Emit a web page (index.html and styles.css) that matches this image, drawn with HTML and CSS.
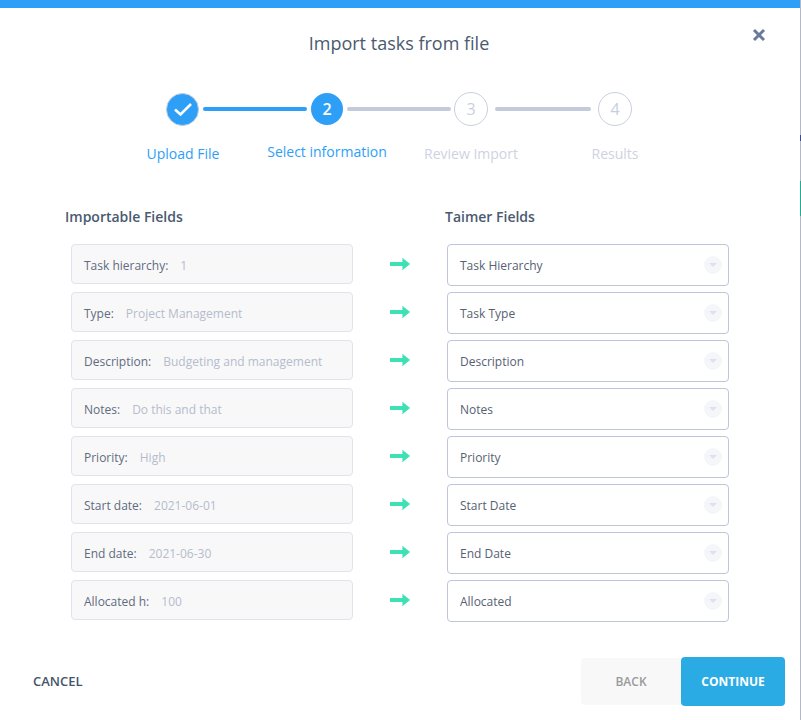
FILE: index.html
```html
<!DOCTYPE html>
<html lang="en">

<head>
    <meta charset="UTF-8">
    <meta name="viewport" content="width=device-width, initial-scale=1.0">
    <title>Import tasks from file</title>
    <link rel="stylesheet" href="styles.css">
</head>

<body>

    <div class="dialog">
        <button class="close" aria-label="Close">
            <svg width="14" height="14" viewBox="0 0 14 14"><path d="M2 2 L12 12 M12 2 L2 12" /></svg>
        </button>

        <h1>Import tasks from file</h1>

        <div class="stepper">
            <div class="circle done">
                <svg width="20" height="16" viewBox="0 0 20 16"><path d="M2 8.5 L7.5 13.5 L18 3" /></svg>
            </div>
            <div class="line line-a active"></div>
            <div class="circle current">2</div>
            <div class="line line-a"></div>
            <div class="circle todo">3</div>
            <div class="line line-b"></div>
            <div class="circle todo">4</div>
        </div>

        <div class="step-labels">
            <span class="label on">Upload File</span>
            <span class="label on raised">Select information</span>
            <span class="label">Review Import</span>
            <span class="label">Results</span>
        </div>

        <div class="headings">
            <h2>Importable Fields</h2>
            <h2>Taimer Fields</h2>
        </div>

        <div class="rows">
            <div class="row">
                <div class="source"><span class="name">Task hierarchy:</span><span class="value">1</span></div>
                <svg class="arrow" width="22" height="14" viewBox="0 0 22 14"><path d="M0 5 H13 V0.5 L21 7 L13 13.5 V9 H0 Z" /></svg>
                <div class="select">Task Hierarchy<span class="caret"></span></div>
            </div>
            <div class="row">
                <div class="source"><span class="name">Type:</span><span class="value">Project Management</span></div>
                <svg class="arrow" width="22" height="14" viewBox="0 0 22 14"><path d="M0 5 H13 V0.5 L21 7 L13 13.5 V9 H0 Z" /></svg>
                <div class="select">Task Type<span class="caret"></span></div>
            </div>
            <div class="row">
                <div class="source"><span class="name">Description:</span><span class="value">Budgeting and management</span></div>
                <svg class="arrow" width="22" height="14" viewBox="0 0 22 14"><path d="M0 5 H13 V0.5 L21 7 L13 13.5 V9 H0 Z" /></svg>
                <div class="select">Description<span class="caret"></span></div>
            </div>
            <div class="row">
                <div class="source"><span class="name">Notes:</span><span class="value">Do this and that</span></div>
                <svg class="arrow" width="22" height="14" viewBox="0 0 22 14"><path d="M0 5 H13 V0.5 L21 7 L13 13.5 V9 H0 Z" /></svg>
                <div class="select">Notes<span class="caret"></span></div>
            </div>
            <div class="row">
                <div class="source"><span class="name">Priority:</span><span class="value">High</span></div>
                <svg class="arrow" width="22" height="14" viewBox="0 0 22 14"><path d="M0 5 H13 V0.5 L21 7 L13 13.5 V9 H0 Z" /></svg>
                <div class="select">Priority<span class="caret"></span></div>
            </div>
            <div class="row">
                <div class="source"><span class="name">Start date:</span><span class="value">2021-06-01</span></div>
                <svg class="arrow" width="22" height="14" viewBox="0 0 22 14"><path d="M0 5 H13 V0.5 L21 7 L13 13.5 V9 H0 Z" /></svg>
                <div class="select">Start Date<span class="caret"></span></div>
            </div>
            <div class="row">
                <div class="source"><span class="name">End date:</span><span class="value">2021-06-30</span></div>
                <svg class="arrow" width="22" height="14" viewBox="0 0 22 14"><path d="M0 5 H13 V0.5 L21 7 L13 13.5 V9 H0 Z" /></svg>
                <div class="select">End Date<span class="caret"></span></div>
            </div>
            <div class="row">
                <div class="source"><span class="name">Allocated h:</span><span class="value">100</span></div>
                <svg class="arrow" width="22" height="14" viewBox="0 0 22 14"><path d="M0 5 H13 V0.5 L21 7 L13 13.5 V9 H0 Z" /></svg>
                <div class="select">Allocated<span class="caret"></span></div>
            </div>
        </div>

        <div class="actions">
            <button class="cancel">CANCEL</button>
            <div class="nav">
                <button class="back">BACK</button>
                <button class="continue">CONTINUE</button>
            </div>
        </div>
    </div>

</body>

</html>
```

FILE: styles.css
```css
html, body {
    height: 720px;
    overflow: hidden;
}

body {
    margin: 0;
    padding: 0;
    font-family: 'Open Sans', sans-serif;
    background: linear-gradient(to bottom,
        #b4b8c4 0, #b4b8c4 135px,
        #3b4a8c 135px, #3b4a8c 141px,
        #b4b8c4 141px, #b4b8c4 181px,
        #1fae91 181px, #1fae91 216px,
        #b4b8c4 216px);
}

button {
    font-family: inherit;
    border: none;
    background: none;
    padding: 0;
}

.dialog {
    position: relative;
    box-sizing: border-box;
    width: 800px;
    height: 720px;
    background-color: #fff;
    border-top: 8px solid #2d9ff7;
}

.close {
    position: absolute;
    top: 20px;
    right: 34px;
    width: 14px;
    height: 14px;
    display: flex;
}

.close path {
    stroke: #6b7a9c;
    stroke-width: 3;
    fill: none;
}

h1 {
    margin: 0;
    padding-top: 23px;
    padding-right: 2px;
    text-align: center;
    font-size: 18px;
    line-height: 25px;
    font-weight: 400;
    color: #4a5a70;
}

.stepper {
    display: flex;
    align-items: center;
    height: 34px;
    margin-top: 36px;
    padding-left: 166px;
}

.circle {
    box-sizing: border-box;
    width: 34px;
    height: 34px;
    border-radius: 50%;
    display: flex;
    align-items: center;
    justify-content: center;
    font-size: 16px;
    font-weight: 400;
    flex-shrink: 0;
}

.done {
    width: 33px;
    height: 33px;
    background-color: #2d9ff7;
    border: 1px solid #c3cbdc;
}

.done path {
    stroke: #fff;
    stroke-width: 2.6;
    fill: none;
}

.current {
    width: 32px;
    height: 32px;
    background-color: #2d9ff7;
    color: #fff;
    font-weight: 600;
}

.todo {
    border: 1px solid #c9cfdf;
    color: #c9cfdf;
}

.line {
    height: 4px;
    border-radius: 2px;
    background-color: #c3cadb;
    margin: 0 3px 0 4px;
}

.line-a {
    width: 104px;
}

.line-a.active {
    margin: 0 4px;
    background-color: #2d9ff7;
}

.line-b {
    width: 96px;
    margin: 0 7px;
}

.step-labels {
    display: grid;
    grid-template-columns: repeat(4, 144px);
    padding-left: 111px;
    margin-top: 17px;
}

.label {
    text-align: center;
    font-size: 14px;
    line-height: 22px;
    color: #cdd3e1;
    white-space: nowrap;
}

.label.on {
    color: #2d9ff7;
}

.raised {
    margin-top: -2px;
}

.headings {
    display: grid;
    grid-template-columns: 380px 1fr;
    padding-left: 65px;
    margin-top: 42px;
}

h2 {
    margin: 0;
    font-size: 14px;
    line-height: 20px;
    font-weight: 600;
    color: #4a5a70;
}

.rows {
    display: flex;
    flex-direction: column;
    gap: 6px;
    margin-top: 17px;
    padding-left: 71px;
}

.row {
    display: flex;
    align-items: flex-start;
    height: 42px;
}

.source {
    box-sizing: border-box;
    width: 282px;
    height: 40px;
    display: flex;
    align-items: center;
    padding: 2px 12px 0;
    gap: 12px;
    font-size: 12px;
    background-color: #f8f8f9;
    border: 1px solid #e0e3ec;
    border-radius: 4px;
    white-space: nowrap;
}

.name {
    color: #5f6b80;
}

.value {
    color: #b5bccd;
}

.arrow {
    margin: 13px 36px 0 37px;
    flex-shrink: 0;
    width: 21px;
}

.arrow path {
    fill: #3fe0b4;
}

.select {
    box-sizing: border-box;
    width: 282px;
    height: 42px;
    display: flex;
    align-items: center;
    justify-content: space-between;
    padding: 0 6px 0 12px;
    font-size: 12px;
    color: #566173;
    background-color: #fff;
    border: 1px solid #bfc6da;
    border-radius: 4px;
}

.caret {
    width: 18px;
    height: 18px;
    border-radius: 50%;
    background-color: #f5f6f9;
    display: flex;
    align-items: center;
    justify-content: center;
}

.caret::after {
    content: "";
    border-left: 4px solid transparent;
    border-right: 4px solid transparent;
    border-top: 4px solid #dfe2ea;
}

.actions {
    display: flex;
    justify-content: space-between;
    align-items: center;
    margin-top: 35px;
    padding: 0 15px 0 33px;
}

.cancel {
    font-size: 13px;
    font-weight: 600;
    color: #44546a;
    padding-bottom: 2px;
}

.nav {
    display: flex;
    align-items: center;
}

.back {
    width: 100px;
    height: 47px;
    font-size: 12px;
    font-weight: 600;
    color: #9a9a9a;
    background-color: #f8f8f8;
    border-radius: 4px 0 0 4px;
}

.continue {
    width: 104px;
    height: 49px;
    font-size: 12px;
    font-weight: 700;
    color: #fff;
    background-color: #2aabe4;
    border-radius: 4px;
}
```
